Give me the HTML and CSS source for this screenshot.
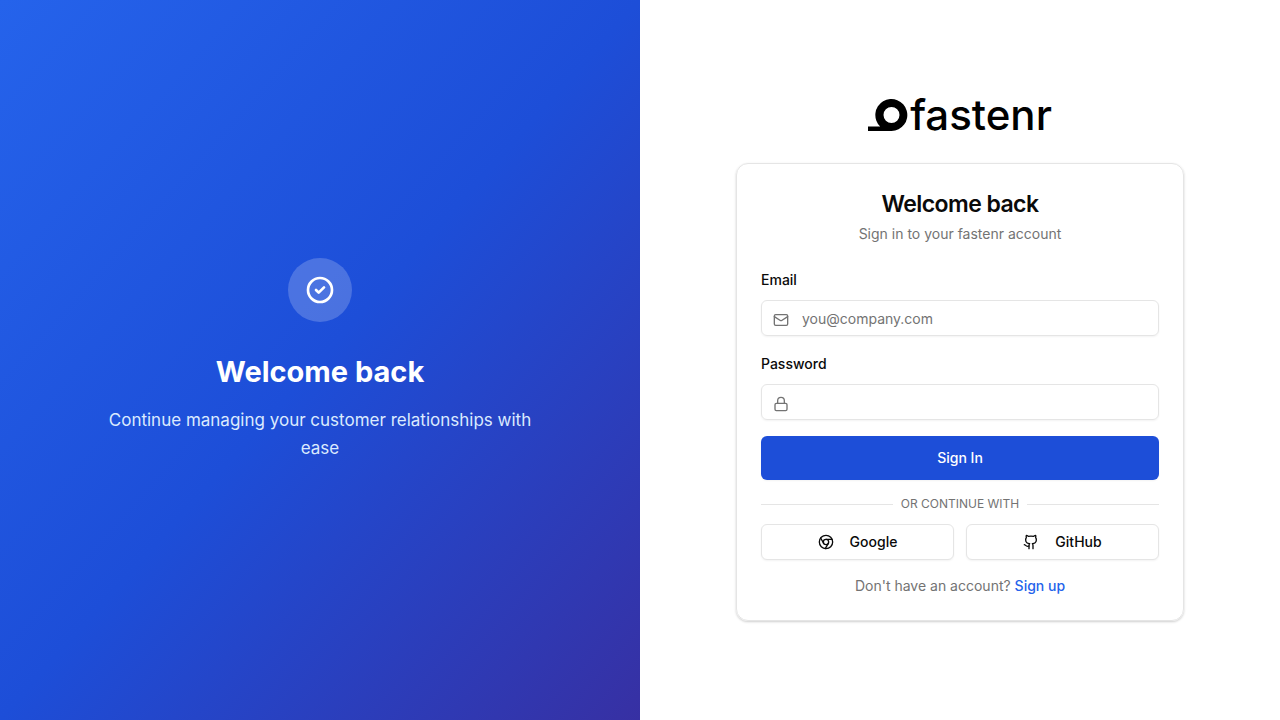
FILE: index.html
```html
<!DOCTYPE html>
<html lang="en">
<head>
<meta charset="utf-8">
<meta name="viewport" content="width=device-width, initial-scale=1">
<title>fastenr – Sign in</title>
<link rel="stylesheet" href="styles.css">
</head>
<body>
<main class="page">
  <section class="hero">
    <div class="hero-content">
      <div class="hero-badge">
        <svg class="icon icon-lg" viewBox="0 0 24 24"><path d="m9 12 2 2 4-4m6 2a9 9 0 1 1-18 0a9 9 0 0 1 18 0z"/></svg>
      </div>
      <h2 class="hero-title">Welcome back</h2>
      <p class="hero-text">Continue managing your customer relationships with ease</p>
    </div>
  </section>
  <section class="panel">
    <div class="logo">
      <svg class="logo-mark" viewBox="0 0 40 32"><path fill-rule="evenodd" d="M0 27.5H12.2A16 16 0 1 1 23.5 32H0ZM23.5 8a8 8 0 1 0 0 16a8 8 0 1 0 0-16Z"/></svg>
      <span class="logo-text">fastenr</span>
    </div>
    <div class="card">
      <header class="card-header">
        <h1 class="card-title">Welcome back</h1>
        <p class="card-subtitle">Sign in to your fastenr account</p>
      </header>
      <form class="form">
        <div class="field">
          <label class="label" for="email">Email</label>
          <div class="control">
            <svg class="icon field-icon" viewBox="0 0 24 24"><path d="m22 7-8.97 5.7a1.94 1.94 0 0 1-2.06 0L2 7"/><rect x="2" y="4" width="20" height="16" rx="2"/></svg>
            <input class="input" id="email" type="email" placeholder="you@company.com">
          </div>
        </div>
        <div class="field">
          <label class="label" for="password">Password</label>
          <div class="control">
            <svg class="icon field-icon" viewBox="0 0 24 24"><rect width="18" height="11" x="3" y="11" rx="2"/><path d="M7 11V7a5 5 0 0 1 10 0v4"/></svg>
            <input class="input" id="password" type="password">
          </div>
        </div>
        <button class="button primary" type="submit">Sign In</button>
      </form>
      <div class="divider"><span>Or continue with</span></div>
      <div class="providers">
        <button class="button outline" type="button">
          <svg class="icon" viewBox="0 0 24 24"><circle cx="12" cy="12" r="10"/><circle cx="12" cy="12" r="4"/><path d="M21.17 8H12M3.95 6.06 8.54 14M10.88 21.94 15.46 14"/></svg>
          Google
        </button>
        <button class="button outline" type="button">
          <svg class="icon" viewBox="0 0 24 24"><path d="M15 22v-4a4.8 4.8 0 0 0-1-3.5c3 0 6-2 6-5.5.08-1.25-.27-2.48-1-3.5.28-1.15.28-2.35 0-3.5 0 0-1 0-3 1.5-2.64-.5-5.36-.5-8 0C6 2 5 2 5 2c-.3 1.15-.3 2.35 0 3.5A5.403 5.403 0 0 0 4 9c0 3.5 3 5.5 6 5.5-.39.49-.68 1.05-.85 1.65-.17.6-.22 1.23-.15 1.85v4"/><path d="M9 18c-4.51 2-5-2-7-2"/></svg>
          GitHub
        </button>
      </div>
      <p class="signup">Don't have an account? <a class="link" href="#">Sign up</a></p>
    </div>
  </section>
</main>
</body>
</html>
```
FILE: styles.css
```css
*, *::before, *::after { box-sizing: border-box; }
body { margin: 0; font-family: Inter, "Liberation Sans", sans-serif; font-size: 14px; line-height: 20px; color: #0a0a0a; background: #fff; }
h1, h2, p { margin: 0; }
.page { display: grid; grid-template-columns: 1fr 1fr; min-height: 100vh; }
.hero { display: flex; align-items: center; justify-content: center; padding: 48px; background: linear-gradient(to bottom right, #2563eb, #1d4ed8 50%, #3730a3); color: #fff; text-align: center; }
.hero-content { max-width: 448px; }
.hero-badge { display: flex; align-items: center; justify-content: center; width: 64px; height: 64px; margin: 0 auto 32px; border-radius: 50%; background: rgba(255, 255, 255, 0.2); }
.hero-title { margin-bottom: 16px; font-size: 29px; line-height: 36px; font-weight: 700; }
.hero-text { font-size: 17px; line-height: 28px; color: #dbeafe; }
.icon { width: 16px; height: 16px; flex: none; fill: none; stroke: currentColor; stroke-width: 2; stroke-linecap: round; stroke-linejoin: round; }
.icon-lg { width: 32px; height: 32px; }
.panel { display: flex; flex-direction: column; align-items: center; justify-content: center; padding: 32px; }
.logo { display: flex; align-items: center; gap: 2px; height: 32px; margin-bottom: 32px; }
.logo-mark { width: 40px; height: 32px; fill: #000; }
.logo-text { font-size: 42px; line-height: 32px; font-weight: 500; color: #000; }
.card { width: 100%; max-width: 448px; padding: 24px; border: 1px solid #e5e5e5; border-radius: 12px; box-shadow: 0 1px 3px rgba(0, 0, 0, 0.1), 0 1px 2px rgba(0, 0, 0, 0.1); }
.card-header { margin-bottom: 24px; text-align: center; }
.card-title { font-size: 23px; line-height: 32px; font-weight: 600; letter-spacing: -0.025em; margin-bottom: 4px; }
.card-subtitle, .signup { color: #737373; text-align: center; }
.form { display: grid; gap: 16px; }
.field { display: grid; gap: 8px; }
.label { font-weight: 500; line-height: 24px; }
.control { position: relative; }
.field-icon { position: absolute; left: 12px; top: 12px; color: #737373; }
.input { display: block; width: 100%; height: 36px; padding: 4px 12px 4px 40px; border: 1px solid #e5e5e5; border-radius: 6px; background: transparent; box-shadow: 0 1px 2px rgba(0, 0, 0, 0.05); font: inherit; color: inherit; }
.input::placeholder { color: #737373; opacity: 1; }
.button { display: flex; align-items: center; justify-content: center; gap: 16px; height: 36px; padding: 0 16px; border: 1px solid #e5e5e5; border-radius: 6px; background: #fff; box-shadow: 0 1px 2px rgba(0, 0, 0, 0.05); font: inherit; font-weight: 500; color: inherit; cursor: pointer; }
.primary { height: 44px; border: 0; background: #1d4ed8; color: #fff; }
.divider { display: flex; align-items: center; gap: 8px; margin: 16px 0 12px; font-size: 12px; line-height: 16px; color: #737373; text-transform: uppercase; }
.divider::before, .divider::after { content: ""; flex: 1; height: 1px; background: #e5e5e5; }
.providers { display: grid; grid-template-columns: 1fr 1fr; gap: 12px; }
.signup { margin-top: 16px; }
.link { color: #2563eb; font-weight: 500; text-decoration: none; }
```
